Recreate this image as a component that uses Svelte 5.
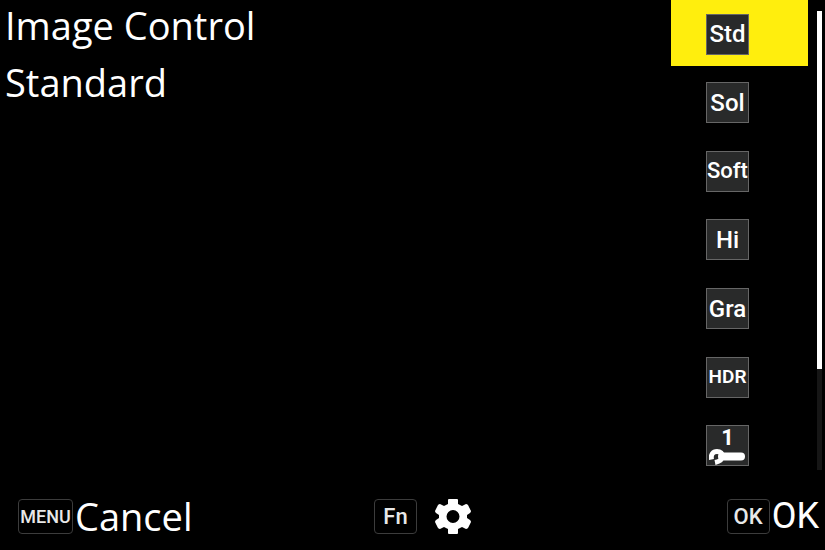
<script lang="ts">
type Mode = {
    id: string;
    label: string;
    name: string;
    size?: "tight" | "small";
};

const modes: Mode[] = [
    { id: "std", label: "Std", name: "Standard" },
    { id: "sol", label: "Sol", name: "Solid" },
    { id: "soft", label: "Soft", name: "Soft", size: "tight" },
    { id: "hi", label: "Hi", name: "Hi" },
    { id: "gra", label: "Gra", name: "Gradation" },
    { id: "hdr", label: "HDR", name: "HDR", size: "small" },
    { id: "custom1", label: "1", name: "Custom 1" },
];

let selected = $state("std");
let current = $derived(modes.find(mode => mode.id === selected) ?? modes[0]);
</script>

<div class="screen">
    <main>
        <header>
            <h1>Image Control</h1>
            <p>{current.name}</p>
        </header>

        <div class="modes">
            {#each modes as mode (mode.id)}
                <button
                    class="mode"
                    class:selected={mode.id === selected}
                    aria-pressed={mode.id === selected}
                    onclick={() => (selected = mode.id)}
                >
                    {#if mode.id === "custom1"}
                        <span class="tile custom">
                            <span>{mode.label}</span>
                            <svg viewBox="0 0 37 16" aria-hidden="true">
                                <path class="jaw" d="M2.500 10.500C1.500 5.500 4 2.500 8 2.500c7 0 8 9 -2 11" />
                                <path class="handle" d="M13 7.500h19" />
                            </svg>
                        </span>
                    {:else}
                        <span class="tile {mode.size ?? ''}">{mode.label}</span>
                    {/if}
                </button>
            {/each}
        </div>

        <div class="track">
            <div class="thumb"></div>
        </div>
    </main>

    <footer>
        <button class="action">
            <span class="key menu">MENU</span>
            <span>Cancel</span>
        </button>
        <button class="action settings" aria-label="Fn settings">
            <span class="key">Fn</span>
            <svg viewBox="0 0 36 36" aria-hidden="true">
                <path
                    fill-rule="evenodd"
                    d="M14 1h8q1 0 1 1v4l4 2 4-2q1 0 2 1l3 6q0 1-1 2l-3 2v3l3 2q1 1 1 2l-3 6q-1 1-2 1l-4-2-4 2v4q0 1-1 1h-8q-1 0-1-1v-4l-4-2-4 2q-1 0-2-1l-3-6q0-1 1-2l3-2v-3l-3-2q-1-1-1-2l3-6q1-1 2-1l4 2 4-2V2q0-1 1-1zM18 12a6.500 6.500 0 1 0 0 13a6.500 6.500 0 1 0 0-13z"
                />
            </svg>
        </button>
        <button class="action confirm">
            <span class="key">OK</span>
            <span>OK</span>
        </button>
    </footer>
</div>

<style>
    :global(body) {
        background: #000;
    }

    .screen {
        display: flex;
        flex-direction: column;
        min-height: 100vh;
        color: #fff;
        font-family: "Open Sans", sans-serif;
        font-size: 38px;
        line-height: 58px;
    }

    main {
        display: flex;
        flex: 1;
    }

    header {
        flex: 1;
        padding-left: 5px;
    }

    h1, p {
        margin: 0 0 7px;
        font-size: inherit;
        font-weight: 400;
        line-height: 50px;
    }

    button {
        border: 0;
        padding: 0;
        background: none;
        color: inherit;
        font: inherit;
    }

    .modes {
        display: grid;
        grid-template-rows: repeat(7, 1fr);
        row-gap: 3px;
        width: 137px;
    }

    .mode {
        display: flex;
        align-items: center;
        padding: 3px 0 0 35px;
    }

    .selected {
        background: #ffee0d;
    }

    .tile {
        display: flex;
        align-items: center;
        justify-content: center;
        box-sizing: border-box;
        width: 43px;
        height: 41px;
        border: 1px solid #666;
        background: #292a2a;
        font-family: "Roboto", sans-serif;
        font-size: 24px;
        font-weight: 500;
        line-height: 24px;
    }

    .tight {
        font-size: 22px;
    }

    .small {
        font-size: 19px;
        font-weight: 600;
    }

    .custom {
        flex-direction: column;
        font-size: 22px;
        font-weight: 700;
        line-height: 22px;
    }

    .custom svg {
        width: 37px;
        height: 16px;
        fill: none;
        stroke: #fff;
    }

    .jaw {
        stroke-width: 5;
    }

    .handle {
        stroke-width: 8;
        stroke-linecap: round;
    }

    .track {
        width: 5px;
        margin: 11px 3px 7px 9px;
        background: #161616;
    }

    .thumb {
        height: 78%;
        background: #fff;
    }

    footer {
        display: grid;
        grid-template-columns: 1fr auto 1fr;
        align-items: center;
        padding: 10px 6px 5px 18px;
    }

    .action {
        display: flex;
        align-items: center;
        justify-self: start;
        gap: 2px;
    }

    .settings {
        gap: 18px;
        padding-left: 8px;
    }

    .settings svg {
        width: 36px;
        height: 36px;
        fill: #fff;
    }

    .confirm {
        justify-self: end;
        font-family: "Roboto", sans-serif;
        font-size: 36px;
    }

    .key {
        box-sizing: border-box;
        width: 43px;
        height: 35px;
        border: 1px solid #3c3c3c;
        border-radius: 4px;
        font-family: "Roboto", sans-serif;
        font-size: 22px;
        font-weight: 500;
        line-height: 33px;
        text-align: center;
        color: #e8e8e8;
    }

    .menu {
        width: 55px;
        font-size: 18px;
    }
</style>
